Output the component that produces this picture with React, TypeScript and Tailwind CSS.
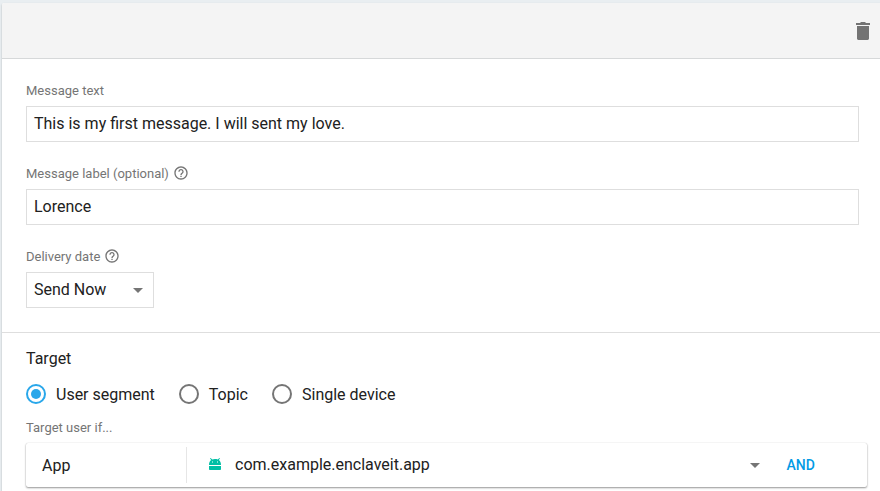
import type { ReactNode } from 'react';

function HelpIcon() {
  return (
    <svg viewBox="0 0 24 24" className="-mt-0.5 -ml-[0.3px] h-4 w-4 shrink-0 fill-[#757575]">
      <path d="M11 18h2v-2h-2v2zm1-16C6.48 2 2 6.48 2 12s4.48 10 10 10 10-4.48 10-10S17.52 2 12 2zm0 18c-4.41 0-8-3.59-8-8s3.59-8 8-8 8 3.59 8 8-3.59 8-8 8zm0-14c-2.21 0-4 1.79-4 4h2c0-1.1.9-2 2-2s2 .9 2 2c0 2-3 1.75-3 5h2c0-2.25 3-2.5 3-5 0-2.21-1.79-4-4-4z" />
    </svg>
  );
}

function TrashIcon() {
  return (
    <svg viewBox="0 0 24 24" className="h-6 w-6 shrink-0 fill-[#737373]">
      <path d="M6 7h12v12.600c0 .8-.6 1.400-1.400 1.400H7.400c-.8 0-1.400-.6-1.400-1.400V7zM5 4h4l1-1h4l1 1h4v2H5V4z" />
    </svg>
  );
}

function AndroidIcon() {
  return (
    <svg viewBox="0 0 12 12" className="-mt-0.5 h-3 w-3 shrink-0">
      <path
        fill="#00bfa5"
        fillRule="evenodd"
        d="M0 7c0-2.200.8-4 2.200-4.900L1 .6l.6-.6 1.700 1.500A6.500 6.500 0 0 1 6 1c.95 0 1.900.15 2.700.5L10.400 0l.6.600-1.200 1.500C11.200 3 12 4.800 12 7H0zM3 3.600v1h1v-1H3zm5 0v1h1v-1H8zM0 8h12v3.200c0 .5-.3.8-.8.8H.8c-.5 0-.8-.3-.8-.8V8z"
      />
    </svg>
  );
}

function Caret() {
  return (
    <svg viewBox="0 0 10 5" className="h-[5px] w-[10px] shrink-0 fill-[#757575]">
      <path d="M0 0h10L5 5z" />
    </svg>
  );
}

function Label({ children, help }: { children: ReactNode; help?: boolean }) {
  return (
    <div className="flex h-4 items-center gap-1 text-[13px] leading-4 text-[#757575]">
      <span>{children}</span>
      {help && <HelpIcon />}
    </div>
  );
}

function Field({ label, value, help }: { label: string; value: string; help?: boolean }) {
  return (
    <div className="flex flex-col gap-[7px]">
      <Label help={help}>{label}</Label>
      <div className="flex h-9 items-center border border-[#dedede] px-[7px]">{value}</div>
    </div>
  );
}

function Radio({ label, checked }: { label: string; checked?: boolean }) {
  return (
    <div className="flex items-center gap-[10px]">
      <span
        className={
          checked
            ? 'flex h-5 w-5 items-center justify-center rounded-full border-2 border-[#29a7ea]'
            : 'h-5 w-5 rounded-full border-2 border-[#757575]'
        }
      >
        {checked && <span className="h-[10px] w-[10px] rounded-full bg-[#29a7ea]" />}
      </span>
      <span className="-mb-0.5">{label}</span>
    </div>
  );
}

export default function App() {
  return (
    <div className="h-[491px] w-[880px] overflow-hidden bg-[#e9eef1] pt-[3px] pl-[2px] font-[Roboto,sans-serif] text-base leading-5 text-[#212121]">
      <div className="h-[500px] w-[890px] rounded-tl-[2px] bg-white shadow-[0_1px_2px_rgba(0,0,0,0.28)]">
        <header className="flex h-14 w-[878px] items-center justify-end rounded-tl-[2px] border-b border-[#d6d8d9] bg-[#f4f4f4] pr-[5px]">
          <TrashIcon />
        </header>

        <section className="flex w-[878px] flex-col gap-6 border-b border-[#dedede] pt-6 pr-[21px] pb-6 pl-6">
          <Field label="Message text" value="This is my first message. I will sent my love." />
          <Field label="Message label (optional)" value="Lorence" help />
          <div className="flex flex-col gap-[7px]">
            <Label help>Delivery date</Label>
            <div className="flex h-9 w-32 items-center justify-between border border-[#dedede] pr-[10px] pl-[7px]">
              <span>Send Now</span>
              <Caret />
            </div>
          </div>
        </section>

        <section className="w-[878px] pt-4 pr-[13px] pl-6">
          <h2>Target</h2>
          <div className="mt-[15px] flex h-5 items-center gap-6">
            <Radio label="User segment" checked />
            <Radio label="Topic" />
            <Radio label="Single device" />
          </div>
          <div className="mt-4 mb-[7px]">
            <Label>Target user if...</Label>
          </div>
          <div className="flex h-11 items-center rounded-[2px] bg-white shadow-[0_1px_2px_rgba(0,0,0,0.4),0_0_1px_rgba(0,0,0,0.2)]">
            <div className="flex h-9 w-[161px] items-center border-r border-[#e6e6e6] pt-0.5 pl-4">App</div>
            <div className="flex flex-1 items-center pr-[27px] pl-[22px]">
              <AndroidIcon />
              <span className="ml-[14px] flex-1">com.example.enclaveit.app</span>
              <Caret />
            </div>
            <div className="w-[80.5px] text-sm font-medium text-[#039be5]">AND</div>
          </div>
        </section>
      </div>
    </div>
  );
}
